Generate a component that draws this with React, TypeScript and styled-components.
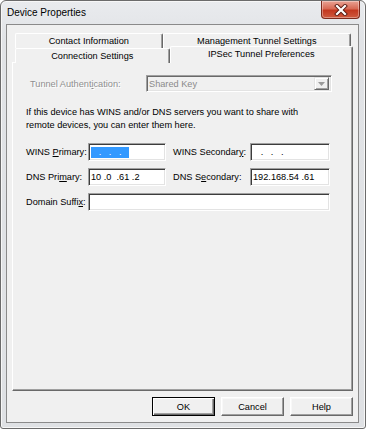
import React from 'react'
import styled, { createGlobalStyle } from 'styled-components'

const GlobalStyle = createGlobalStyle`
	html, body {
		margin: 0;
		padding: 0;
		background: #ffffff;
	}
	body {
		font-family: "Liberation Sans", Arial, sans-serif;
		font-size: 9.2px;
		color: #000000;
	}
	* {
		box-sizing: border-box;
	}
`

const StyledWindow = styled.div`
	display: flex;
	flex-direction: column;
	width: 366px;
	height: 429px;
	background: linear-gradient(#e9ebee, #e1e3e6 40px, #dfe1e4);
	border: 1px solid #6b6b6b;
	border-radius: 6px 6px 3px 3px;
	box-shadow: inset 0 0 0 1px #f7f7f7;
`

const StyledTitleBar = styled.div`
	display: flex;
	justify-content: space-between;
	align-items: flex-start;
	height: 23px;
`

const StyledTitle = styled.div`
	padding: 6px 0 0 6px;
	font-size: 10px;
	color: #000;
`

const StyledCloseButton = styled.div`
	display: flex;
	align-items: center;
	justify-content: center;
	width: 39px;
	height: 18px;
	margin-right: 5px;
	border: 1px solid #7d2a1c;
	border-top: none;
	border-radius: 0 0 4px 4px;
	background: linear-gradient(#e9a394, #d86a55 45%, #c3381f 55%, #cf5a3f);
	box-shadow: inset 0 0 0 1px rgba(255, 255, 255, 0.35);
`

const StyledClient = styled.div`
	flex: 1;
	display: flex;
	flex-direction: column;
	margin: 0 6px 5px 5px;
	padding: 8px 5px 0 5px;
	border: 1px solid #8a8a8a;
	background: #f0f0f0;
`

const StyledTabRow = styled.div<{ rowHeight: number }>`
	display: flex;
	height: ${(p) => p.rowHeight}px;
	padding: 0 2px 0 3px;
`

const StyledTab = styled.div<{ tabWidth: number; active?: boolean }>`
	position: relative;
	width: ${(p) => p.tabWidth + (p.active ? 2 : 0)}px;
	height: ${(p) => (p.active ? 17 : 15)}px;
	margin: ${(p) => (p.active ? '-2px -2px 0 0' : '0')};
	z-index: ${(p) => (p.active ? 2 : 1)};
	border-top: 1px solid #ffffff;
	border-left: 1px solid #ffffff;
	border-right: 1px solid #696969;
	border-radius: 2px 2px 0 0;
	background: #f0f0f0;
	box-shadow: inset -1px 0 0 #a0a0a0;
	text-align: center;
	line-height: ${(p) => (p.active ? 14 : 15)}px;
	white-space: nowrap;
`

const StyledPanel = styled.div`
	height: 329px;
	padding: 12px 0 0 13px;
	border-top: 1px solid #ffffff;
	border-left: 1px solid #ffffff;
	border-right: 1px solid #696969;
	border-bottom: 1px solid #696969;
	box-shadow: inset -1px -1px 0 #a0a0a0;
`

const StyledAuthRow = styled.div`
	display: flex;
	align-items: center;
	height: 17px;
	margin-left: 4px;
`

const StyledDisabledLabel = styled.span`
	width: 116px;
	color: #8f8f8f;
	text-shadow: 1px 1px 0 #ffffff;
`

const StyledSelect = styled.div`
	display: flex;
	align-items: center;
	justify-content: space-between;
	width: 186px;
	height: 17px;
	padding: 0 1px 0 2px;
	border: 1px solid;
	border-color: #a0a0a0 #ffffff #ffffff #a0a0a0;
	box-shadow: inset 1px 1px 0 #696969, inset -1px -1px 0 #e3e3e3;
	background: #f0f0f0;
	color: #8a8a8a;
`

const StyledDropButton = styled.div`
	display: flex;
	align-items: center;
	justify-content: center;
	width: 15px;
	height: 13px;
	margin-right: 1px;
	border: 1px solid;
	border-color: #e3e3e3 #696969 #696969 #e3e3e3;
	box-shadow: inset 1px 1px 0 #ffffff, inset -1px -1px 0 #a0a0a0;
	background: #f0f0f0;
`

const StyledParagraph = styled.p`
	width: 310px;
	margin: 14px 0 0 0;
	line-height: 13px;
`

const StyledFieldGrid = styled.div`
	display: grid;
	grid-template-columns: 62px 85px 77px 80px;
	grid-auto-rows: 18px;
	row-gap: 7px;
	align-items: center;
	margin-top: 11px;
`

const StyledLabel = styled.label`
	white-space: nowrap;
`

const StyledInput = styled.div<{ fieldWidth: number; span?: number }>`
	display: flex;
	align-items: center;
	width: ${(p) => p.fieldWidth}px;
	height: 18px;
	padding: 0 2px;
	grid-column: ${(p) => (p.span ? `span ${p.span}` : 'auto')};
	border: 1px solid;
	border-color: #a0a0a0 #ffffff #ffffff #a0a0a0;
	box-shadow: inset 1px 1px 0 #3c3c3c, inset -1px -1px 0 #e3e3e3;
	background: #ffffff;
	white-space: pre;
`

const StyledSelection = styled.span`
	display: inline-block;
	width: 38px;
	height: 11px;
	line-height: 11px;
	background: #3399ff;
	color: #ffffff;
	white-space: pre;
`

const StyledButtonRow = styled.div`
	display: flex;
	justify-content: flex-end;
	gap: 6px;
	margin-top: 6px;
`

const StyledButton = styled.button<{ isDefault?: boolean }>`
	width: 63px;
	height: 19px;
	padding: 0;
	font-family: "Liberation Sans", Arial, sans-serif;
	font-size: 9.2px;
	color: #000;
	background: #f0f0f0;
	border: 1px solid;
	border-color: ${(p) =>
		p.isDefault ? '#000000' : '#ffffff #696969 #696969 #ffffff'};
	box-shadow: ${(p) =>
		p.isDefault
			? 'inset 1px 1px 0 #ffffff, inset -1px -1px 0 #696969, inset -2px -2px 0 #a0a0a0'
			: 'inset -1px -1px 0 #a0a0a0, inset 1px 1px 0 #f8f8f8'};
`

const CloseIcon = () => (
	<svg width="14" height="12" viewBox="0 0 14 12">
		<path d="M3 2 L11 10 M11 2 L3 10" stroke="#5a1a10" strokeWidth="4" strokeLinecap="square" />
		<path d="M3 2 L11 10 M11 2 L3 10" stroke="#ffffff" strokeWidth="2.2" strokeLinecap="square" />
	</svg>
)

const DropArrow = () => (
	<svg width="7" height="4" viewBox="0 0 7 4">
		<path d="M0 0 L7 0 L3.5 4 Z" fill="#9a9a9a" />
	</svg>
)

export default function App() {
	return (
		<>
			<GlobalStyle />
			<StyledWindow>
				<StyledTitleBar>
					<StyledTitle>Device Properties</StyledTitle>
					<StyledCloseButton>
						<CloseIcon />
					</StyledCloseButton>
				</StyledTitleBar>
				<StyledClient>
					<StyledTabRow rowHeight={15}>
						<StyledTab tabWidth={148}>Contact Information</StyledTab>
						<StyledTab tabWidth={189}>Management Tunnel Settings</StyledTab>
					</StyledTabRow>
					<StyledTabRow rowHeight={14}>
						<StyledTab tabWidth={155}>Connection Settings</StyledTab>
						<StyledTab tabWidth={182} active>
							IPSec Tunnel Preferences
						</StyledTab>
					</StyledTabRow>
					<StyledPanel>
						<StyledAuthRow>
							<StyledDisabledLabel>
								Tunnel Authent<u>i</u>cation:
							</StyledDisabledLabel>
							<StyledSelect>
								<span>Shared Key</span>
								<StyledDropButton>
									<DropArrow />
								</StyledDropButton>
							</StyledSelect>
						</StyledAuthRow>
						<StyledParagraph>
							If this device has WINS and/or DNS servers you want to share with
							<br />
							remote devices, you can enter them here.
						</StyledParagraph>
						<StyledFieldGrid>
							<StyledLabel>
								WINS <u>P</u>rimary:
							</StyledLabel>
							<div>
								<StyledInput fieldWidth={78}>
									<StyledSelection>{'   .   .   .'}</StyledSelection>
								</StyledInput>
							</div>
							<StyledLabel>
								WINS Secondar<u>y</u>:
							</StyledLabel>
							<StyledInput fieldWidth={80}>{'   .   .   .'}</StyledInput>

							<StyledLabel>
								DNS Pri<u>m</u>ary:
							</StyledLabel>
							<div>
								<StyledInput fieldWidth={78}>{'10 .0  .61 .2'}</StyledInput>
							</div>
							<StyledLabel>
								DNS S<u>e</u>condary:
							</StyledLabel>
							<StyledInput fieldWidth={80}>{'192.168.54 .61'}</StyledInput>

							<StyledLabel>
								Domain Suffi<u>x</u>:
							</StyledLabel>
							<StyledInput fieldWidth={242} span={3} />
						</StyledFieldGrid>
					</StyledPanel>
					<StyledButtonRow>
						<StyledButton isDefault>OK</StyledButton>
						<StyledButton>Cancel</StyledButton>
						<StyledButton>Help</StyledButton>
					</StyledButtonRow>
				</StyledClient>
			</StyledWindow>
		</>
	)
}
